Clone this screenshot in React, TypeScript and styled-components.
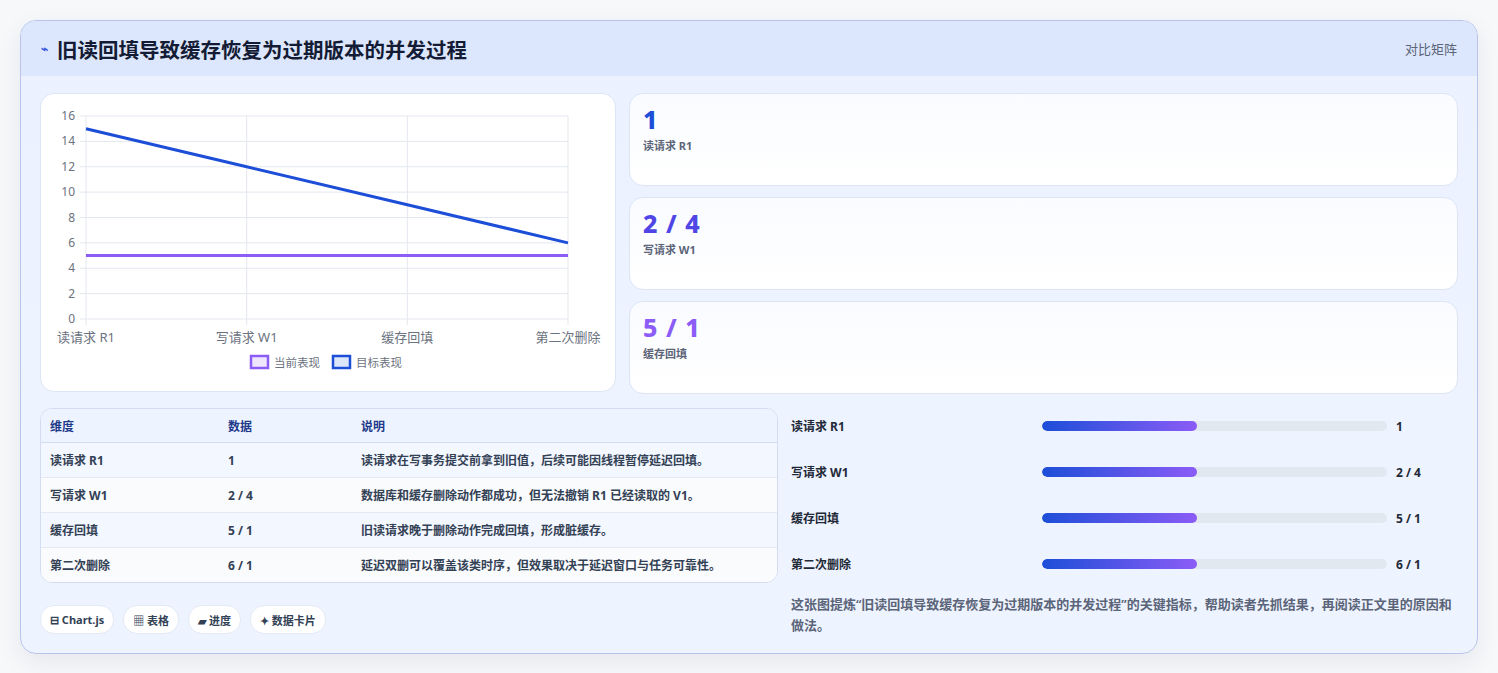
import React from "react";
import styled, { createGlobalStyle } from "styled-components";

const Global = createGlobalStyle`
  body { margin: 0; background: #f7f8fa; font-family: "Noto Sans", "Noto Sans CJK SC", sans-serif; }
`;

const Page = styled.div`padding: 20px 20px 20px 20px; width: 1498px; box-sizing: border-box;`;
const Card = styled.div`
  width: 1458px; box-sizing: border-box; border: 1px solid #b9c4ea; border-radius: 16px; overflow: hidden;
  background: linear-gradient(180deg, #ebf1ff 0%, #eef4ff 100%);
  box-shadow: 0 8px 24px rgba(30,40,80,0.08);
`;
const Header = styled.div`
  height: 55px; background: #dce7fd; display: flex; align-items: center; justify-content: space-between;
  padding: 0 20px; box-sizing: border-box;
`;
const Title = styled.h1`
  margin: 0; font-size: 20.5px; font-weight: 700; color: #141b34; display: flex; align-items: center; gap: 9px;
`;
const TitleIcon = styled.span`color: #3b5bdb; font-size: 12px;`;
const HeaderRight = styled.span`font-size: 13px; color: #5b6478;`;
const Body = styled.div`padding: 17px 19px 17px 19px;`;
const Top = styled.div`display: grid; grid-template-columns: 576px 1fr; gap: 13px;`;
const ChartCard = styled.div`
  background: #fff; border: 1px solid #dde5f5; border-radius: 14px; height: 299px; box-sizing: border-box; overflow: hidden;
`;
const Stats = styled.div`display: flex; flex-direction: column; gap: 11px;`;
const Stat = styled.div`
  height: 93px; box-sizing: border-box; border: 1px solid #dde5f5; border-radius: 14px;
  background: linear-gradient(180deg, #f9fbff, #fff); padding: 10px 13px;
`;
const StatValue = styled.div<{ $c: string }>`font-size: 25px; font-weight: 800; color: ${p => p.$c}; line-height: 30px; letter-spacing: 1px;`;
const StatLabel = styled.div`font-size: 11px; font-weight: 700; color: #5b6478; margin-top: 3px;`;
const Bottom = styled.div`display: grid; grid-template-columns: 738px 1fr; gap: 13px; margin-top: 14px;`;
const Table = styled.table`
  width: 100%; border-collapse: separate; border-spacing: 0; border: 1px solid #d3dcf0; border-radius: 12px; overflow: hidden;
  font-size: 12px; font-weight: 700; color: #334155; background: #fff;
  th { text-align: left; color: #1e3a8a; background: #eef4ff; height: 33px; padding: 0 9px; border-bottom: 1px solid #d3dcf0; }
  td { height: 34px; padding: 0 9px; border-bottom: 1px solid #e3e9f5; }
  tr:nth-child(odd) td { background: #f3f7ff; }
  tr:nth-child(even) td { background: #fafbfd; }
  tr:last-child td { border-bottom: none; }
`;
const Chips = styled.div`display: flex; gap: 9px; margin-top: 22px;`;
const Chip = styled.span`
  height: 27px; padding: 0 9px; border-radius: 14px; background: #fff; border: 1px solid #e3e9f5;
  display: inline-flex; align-items: center; font-size: 11px; font-weight: 700; color: #334155; gap: 2px;
`;
const Bars = styled.div`margin-top: -5px;`;
const BarRow = styled.div`display: grid; grid-template-columns: 251px 345px 1fr; align-items: center; height: 46px;`;
const BarLabel = styled.span`font-size: 12px; font-weight: 700; color: #1f2937;`;
const Track = styled.div`height: 10px; border-radius: 5px; background: #e2e8f0; overflow: hidden;`;
const Fill = styled.div`height: 100%; border-radius: 5px; background: linear-gradient(90deg, #1d4ed8, #8b5cf6);`;
const BarValue = styled.span`font-size: 12px; font-weight: 700; color: #1f2937; padding-left: 9px;`;
const Desc = styled.p`margin: 7px 0 0; font-size: 13px; line-height: 21px; color: #5b6478; font-weight: 600;`;

const rows = [
  ["读请求 R1", "1", "读请求在写事务提交前拿到旧值，后续可能因线程暂停延迟回填。"],
  ["写请求 W1", "2 / 4", "数据库和缓存删除动作都成功，但无法撤销 R1 已经读取的 V1。"],
  ["缓存回填", "5 / 1", "旧读请求晚于删除动作完成回填，形成脏缓存。"],
  ["第二次删除", "6 / 1", "延迟双删可以覆盖该类时序，但效果取决于延迟窗口与任务可靠性。"],
];

function Chart() {
  const x0 = 45, x1 = 527, y0 = 225, y1 = 22;
  const xs = [0, 1, 2, 3].map(i => x0 + (i * (x1 - x0)) / 3);
  const y = (v: number) => y0 - (v / 16) * (y0 - y1);
  const labels = ["读请求 R1", "写请求 W1", "缓存回填", "第二次删除"];
  const target = [15, 12, 9, 6];
  const font = { fontFamily: "Noto Sans, Noto Sans CJK SC, sans-serif" };
  return (
    <svg width="575" height="297" style={font}>
      {[0, 2, 4, 6, 8, 10, 12, 14, 16].map(v => (
        <g key={v}>
          <line x1={x0 - 6} x2={x1} y1={y(v)} y2={y(v)} stroke="#e3e7ee" />
          <text x={x0 - 11} y={y(v) + 4} fontSize="12" fill="#6b7280" textAnchor="end">{v}</text>
        </g>
      ))}
      {xs.map((x, i) => (
        <g key={i}>
          <line x1={x} x2={x} y1={y1} y2={y0 + 6} stroke="#e3e7ee" />
          <text x={x} y={y0 + 23} fontSize="13" fill="#6b7280" textAnchor="middle">{labels[i]}</text>
        </g>
      ))}
      <line x1={x0} x2={x1} y1={y(5)} y2={y(5)} stroke="#8b5cf6" strokeWidth="3" />
      <polyline points={xs.map((x, i) => `${x},${y(target[i])}`).join(" ")} fill="none" stroke="#1d4ed8" strokeWidth="3" />
      <rect x="210" y="262" width="17" height="12" fill="#efe6fd" stroke="#8b5cf6" strokeWidth="2.5" />
      <text x="233" y="273" fontSize="11.5" fill="#6b7280">当前表现</text>
      <rect x="292" y="262" width="17" height="12" fill="#dce6fb" stroke="#1d4ed8" strokeWidth="2.5" />
      <text x="315" y="273" fontSize="11.5" fill="#6b7280">目标表现</text>
    </svg>
  );
}

export default function App() {
  return (
    <Page>
      <Global />
      <Card>
        <Header>
          <Title><TitleIcon>⌁</TitleIcon>旧读回填导致缓存恢复为过期版本的并发过程</Title>
          <HeaderRight>对比矩阵</HeaderRight>
        </Header>
        <Body>
          <Top>
            <ChartCard><Chart /></ChartCard>
            <Stats>
              <Stat><StatValue $c="#1d4ed8">1</StatValue><StatLabel>读请求 R1</StatLabel></Stat>
              <Stat><StatValue $c="#4f46e5">2 / 4</StatValue><StatLabel>写请求 W1</StatLabel></Stat>
              <Stat><StatValue $c="#8b5cf6">5 / 1</StatValue><StatLabel>缓存回填</StatLabel></Stat>
            </Stats>
          </Top>
          <Bottom>
            <div>
              <Table>
                <thead><tr><th style={{ width: 160 }}>维度</th><th style={{ width: 115 }}>数据</th><th>说明</th></tr></thead>
                <tbody>
                  {rows.map(r => <tr key={r[0]}><td>{r[0]}</td><td>{r[1]}</td><td>{r[2]}</td></tr>)}
                </tbody>
              </Table>
              <Chips>
                <Chip>⊟ Chart.js</Chip><Chip>▦ 表格</Chip><Chip>▰ 进度</Chip><Chip>✦ 数据卡片</Chip>
              </Chips>
            </div>
            <div>
              <Bars>
                {rows.map(r => (
                  <BarRow key={r[0]}>
                    <BarLabel>{r[0]}</BarLabel>
                    <Track><Fill style={{ width: "45%" }} /></Track>
                    <BarValue>{r[1]}</BarValue>
                  </BarRow>
                ))}
              </Bars>
              <Desc>这张图提炼“旧读回填导致缓存恢复为过期版本的并发过程”的关键指标，帮助读者先抓结果，再阅读正文里的原因和做法。</Desc>
            </div>
          </Bottom>
        </Body>
      </Card>
    </Page>
  );
}
